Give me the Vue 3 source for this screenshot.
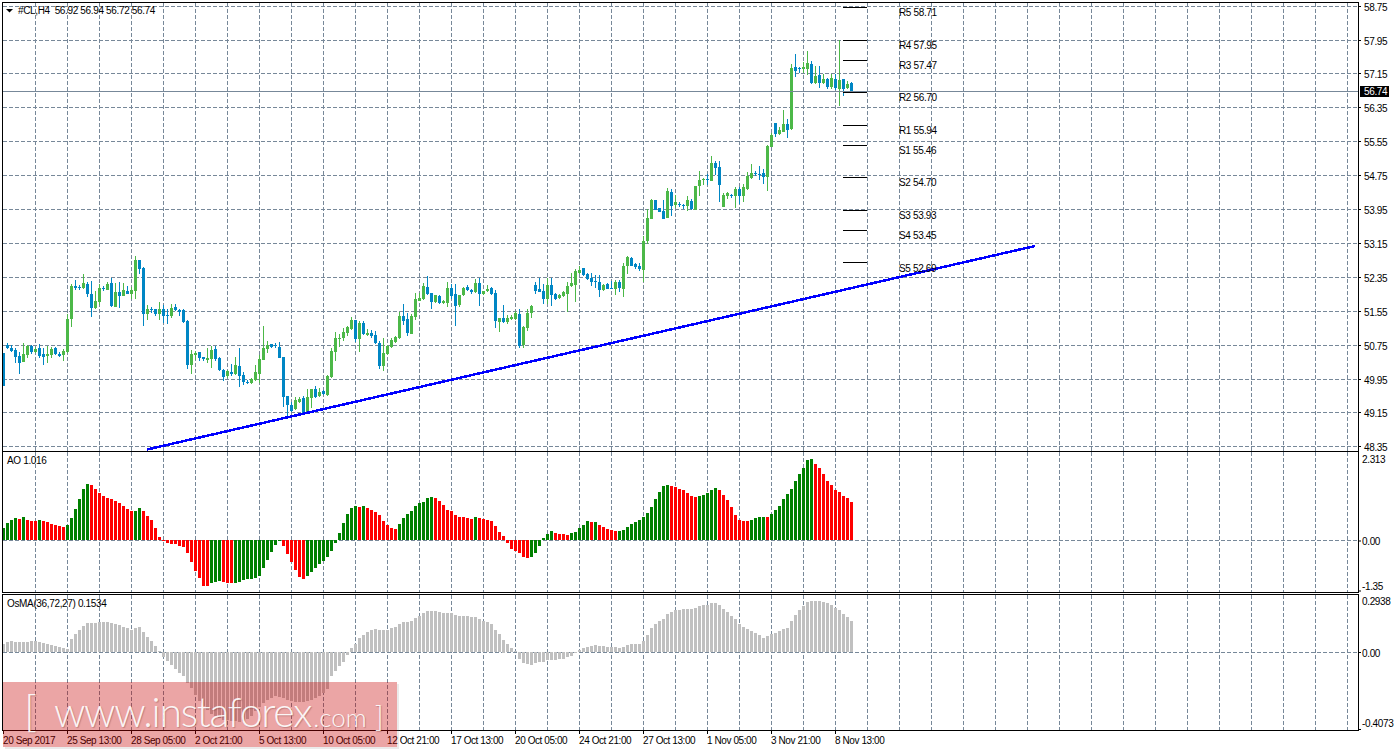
<template>
  <div class="terminal">
    <section class="pane pane-main">
      <div class="plot">
        <svg viewBox="3 3 1355 448" class="plot-svg">
          <path class="grid" :d="vGrid(3, 451)" />
          <path class="grid" :d="hGrid(mainLevels)" />
          <g shape-rendering="crispEdges">
            <g v-for="c in candles" :key="c.i" :fill="c.color">
              <rect :x="3 + 4 * c.i" :y="c.h" width="1" :height="c.l - c.h" />
              <rect :x="2 + 4 * c.i" :y="c.t" width="3" :height="c.b - c.t" />
            </g>
            <rect x="3" y="91" width="1355" height="1" fill="#778899" />
            <rect v-for="p in pivots" :key="p.name" x="843" :y="p.y" width="24" height="1" fill="#000" />
          </g>
          <line x1="147" y1="449.5" x2="1035" y2="246" class="trend" />
          <text v-for="p in pivots" :key="'t' + p.name" x="899" :y="p.labelY + 4" class="label">{{ p.name }} {{ p.value }}</text>
          <path d="M6 9h7l-3.5 3.5z" fill="#000" />
          <text x="18" y="14" class="label">#CL,H4 &nbsp;56.92 56.94 56.72 56.74</text>
        </svg>
      </div>
      <svg viewBox="1359 3 39 448" class="axis-svg">
        <g v-for="(lvl, n) in mainLevels" :key="lvl">
          <rect x="1359" :y="lvl" width="2" height="1" fill="#000" />
          <text x="1364" :y="lvl + 4.5" class="label">{{ mainLabels[n] }}</text>
        </g>
        <rect x="1360" y="86" width="29" height="11" fill="#000" />
        <text x="1364" y="95" class="label last-price">56.74</text>
      </svg>
    </section>

    <section class="pane pane-ao">
      <div class="plot">
        <svg viewBox="3 452 1355 140" class="plot-svg">
          <path class="grid" :d="vGrid(452, 592)" />
          <path class="grid" d="M3 540.5H1358" />
          <g shape-rendering="crispEdges">
            <rect
              v-for="b in aoBars"
              :key="b.i"
              :x="2 + 4 * b.i"
              :y="b.y"
              width="3"
              :height="b.height"
              :fill="b.color"
            />
          </g>
          <text x="7" y="464" class="label">AO 1.016</text>
        </svg>
      </div>
      <svg viewBox="1359 452 39 140" class="axis-svg">
        <rect x="1359" y="540" width="2" height="1" fill="#000" />
        <rect x="1359" y="590" width="2" height="1" fill="#000" />
        <text x="1362" y="462" class="label">2.313</text>
        <text x="1362" y="544.5" class="label">0.00</text>
        <text x="1362" y="589" class="label">-1.35</text>
      </svg>
    </section>

    <section class="pane pane-osma">
      <div class="plot">
        <svg viewBox="3 595 1355 135" class="plot-svg">
          <path class="grid" :d="vGrid(595, 730)" />
          <path class="grid" d="M3 652.5H1358" />
          <g shape-rendering="crispEdges" fill="#c0c0c0">
            <rect
              v-for="b in osmaBars"
              :key="b.i"
              :x="2 + 4 * b.i"
              :y="b.y"
              width="3"
              :height="b.height"
            />
          </g>
          <text x="7" y="607" class="label">OsMA(36,72,27) 0.1534</text>
        </svg>
      </div>
      <svg viewBox="1359 595 39 135" class="axis-svg">
        <rect x="1359" y="652" width="2" height="1" fill="#000" />
        <rect x="1359" y="729" width="2" height="1" fill="#000" />
        <text x="1362" y="605" class="label">0.2938</text>
        <text x="1362" y="656.5" class="label">0.00</text>
        <text x="1362" y="727" class="label">-0.4073</text>
      </svg>
    </section>

    <div class="time-axis">
      <span v-for="d in dates" :key="d" class="time">{{ d }}</span>
    </div>

    <div class="watermark">
      <span class="bracket-left">[</span>
      <span class="site">www.instaforex</span>
      <span class="tld">.com</span>
      <span class="bracket-right">]</span>
    </div>
  </div>
</template>

<script setup>
const GREEN = '#4cb848';
const BLUE = '#0086c4';

// pixel readings off the chart, 3x scale: colour, body top, body bottom, high, low
const candleRows = [
  {
    off: 240,
    rows: `b 340 437 340 437;b 316 324 309 327;b 324 333 316 336;b 331 350 325 368;b 348 368 337 401;g 342 365 310 366;g 317 345 316 353;b 318 336 316 343;g 327 336 322 340;b 324 347 312 353;b 342 351 325 375;g 342 348 317 369;g 327 345 322 354;b 323 342 322 345;b 342 348 336 352;g 333 345 327 363;g 237 336 223 338;g 138 236 132 261;b 139 145 120 149;b 141 144 135 149;g 129 145 102 147;b 132 162 127 171;b 162 204 123 231;g 183 204 153 206;g 144 186 132 195;b 144 147 138 153;g 132 150 126 151;b 129 198 114 201;g 156 201 129 202;b 156 168 126 204;g 150 168 129 169;b 153 162 138 163;g 150 162 140 177;g 60 153 48 177;b 60 87 60 102;b 84 222 81 258;g 207 222 195 240;b 207 210 201 219;b 207 222 207 228;g 207 222 186 240;b 207 228 195 249;b 225 228 207 252;g 204 228 192 234;b 201 210 192 212;b 210 216 207 228;b 210 246 207 249;b 243 375 240 387;g 342 375 330 402;g 339 345 333 360;b 336 354 336 363;b 351 357 351 363;g 354 360 323 369;g 330 357 318 384;b 327 357 318 363;b 354 390 351 393;b 390 411 387 423;g 393 408 390 414;b 396 402 372 408;g 375 402 351 405;b 378 408 324 441;b 405 426 396 435;b 426 429 420 432;g 417 429 414 431;g 396 420 375 422;g 357 402 345 429;g 324 360 258 361;g 315 327 303 340;b 312 321 312 324;b 315 319 309 324;b 321 354 306 354;b 351 471 351 501;b 468 495 468 528;b 495 513 486 516;g 480 507 471 510;g 477 486 471 489;b 475 520 468 522;g 471 517 447 520;g 447 474 447 503;b 447 471 438 473;g 456 468 444 470;b 453 462 450 465;g 408 465 405 468;g 333 411 324 413;g 294 336 276 363;g 294 297 282 321;g 276 294 264 303;g 261 279 258 288;g 240 267 231 270;b 240 297 240 306;g 249 297 243 336;b 249 282 243 285;g 279 285 267 288;b 279 288 270 294;b 285 309 273 312;b 309 378 303 387;g 339 378 294 393;g 318 342 315 345;g 300 321 294 324;g 291 306 288 309;g 228 294 216 297;b 228 243 192 255;b 237 279 219 288;g 228 282 222 283;g 177 231 160 240;g 174 183 160 184;g 138 177 129 180;b 141 162 108 165;b 159 186 159 207;g 165 186 165 188;b 168 189 165 192;g 183 189 180 192;g 144 189 126 201;b 144 168 132 177;b 162 198 132 258;g 165 195 165 201;g 144 165 141 168;b 141 150 135 153;b 150 156 147 162;g 129 156 117 159;b 129 162 114 198;g 153 162 153 164;g 147 153 135 156;b 144 162 141 165;b 159 243 150 264;g 234 246 234 276;b 234 246 195 249;g 234 246 225 251;g 232 237 225 240;g 219 237 213 240;b 222 318 207 324;g 261 315 258 324;g 219 264 207 273;g 198 219 195 234;b 135 153 126 162;b 147 156 114 157;b 153 177 132 192;g 135 177 114 192;b 135 165 114 198;b 162 177 159 180;g 165 174 162 177;g 156 168 153 171;g 138 162 125 215;g 129 138 99 141;g 93 135 87 186;g 90 99 78 102;b 84 105 84 108;b 102 117 99 120;b 114 126 99 138;b 123 126 105 144;b 126 150 105 171`,
  },
  {
    off: 130,
    rows: `g 465 480 462 483;b 462 477 460 477;b 474 477 453 477;g 456 477 450 495;b 456 474 450 486;g 408 477 399 501;g 381 408 378 432;b 384 408 381 408;b 402 411 399 417;b 408 417 399 423;g 333 420 318 456;g 264 333 237 342;g 210 267 207 267;b 210 240 210 240;b 234 246 234 246;b 243 267 210 267;g 183 264 174 264;b 186 228 177 258;g 216 225 195 234;b 222 225 216 231;b 225 228 222 237;g 210 228 198 243;b 213 237 207 240;g 168 240 168 240;g 150 168 123 198;g 147 150 144 165;b 147 150 132 165;g 99 153 78 153;b 99 114 93 135;b 111 165 93 216;g 195 231 189 231;g 189 198 186 207;b 195 198 192 204;g 177 198 171 234;b 177 198 171 222;g 171 198 162 216;g 138 177 126 180;g 129 144 102 147;b 129 133 123 138;b 132 135 108 150;b 129 141 117 162;g 48 141 45 183;g 15 51 9 51`,
  },
  {
    off: 0,
    rows: `b 369 402 369 410;g 390 402 381 405;g 372 396 330 397;b 372 390 357 414;g 204 387 192 390;b 201 213 162 231;b 203 206 201 220;g 201 207 186 219;g 189 207 153 225;b 192 249 183 252;g 228 249 198 252;b 225 249 198 264;g 237 249 222 252;b 237 261 234 267;g 234 261 222 267;b 237 264 222 270;g 240 267 120 318;b 237 267 237 288;g 252 264 243 267;b 249 276 246 276`,
  },
];

const candles = [];
candleRows.forEach(({ off, rows }) => {
  rows.split(';').forEach((row) => {
    const [c, t, b, h, l] = row.split(' ');
    const toY = (z) => Math.round(off + z / 3);
    const top = toY(+t);
    candles.push({
      i: candles.length,
      color: c === 'g' ? GREEN : BLUE,
      t: top,
      b: Math.max(toY(+b), top + 1),
      h: toY(+h),
      l: toY(+l),
    });
  });
});

const mainLevels = [6, 40, 73, 107, 141, 175, 209, 243, 277, 311, 345, 379, 412, 446];
const mainLabels = ['58.75', '57.95', '57.15', '56.35', '55.55', '54.75', '53.95', '53.15', '52.35', '51.55', '50.75', '49.95', '49.15', '48.35'];

const pivots = [
  { name: 'R5', value: '58.71', y: 7, labelY: 12 },
  { name: 'R4', value: '57.95', y: 40, labelY: 45 },
  { name: 'R3', value: '57.47', y: 60, labelY: 65 },
  { name: 'R2', value: '56.70', y: 92, labelY: 97 },
  { name: 'R1', value: '55.94', y: 125, labelY: 130 },
  { name: 'S1', value: '55.46', y: 145, labelY: 150 },
  { name: 'S2', value: '54.70', y: 177, labelY: 182 },
  { name: 'S3', value: '53.93', y: 210, labelY: 215 },
  { name: 'S4', value: '53.45', y: 230, labelY: 235 },
  { name: 'S5', value: '52.69', y: 262, labelY: 268 },
];

const aoRaw = [
  { zero: 300, rows: 'g264 g250 g240 g234 r237 g231 r240 r243 r243 g240 r243 r246 r252 r255 r258 r261 g255 g234 g207 g177 g147 g132 r135 r147 r159 r168 r174 r177 r183 r189 r198 r207 r213 g213 g204 r213 r228 r240 r264 r291 r303 r309 r312 r312 r318 r321 r339 r366 r393 r414 r438 r438 g429 g426 g423 r426 r429 r429 g429 g426 g420 g417 g417 g414 g408 g384 g360 g336 g315 g303 r318 r342 r366 r390 r411' },
  { zero: 270, rows: 'r387 g378 g366 g354 g342 g333 g321 g303 g279 g249 g219 g192 g174 g168 r171 g168 r174 r180 r186 r195 r213 r225 r234 r237 g222 g204 g192 g183 g168 g159 g156 g144 g141 r144 r153 r165 r180 r183 r195 r201 r201 r204 r207 g201 r204 r207 r210 r213 r228 r246 r258 r279 r297 r303 r309 r321 r324 g321 g309 g288 g264 g252 g243 r249 r252 r252 r255 g249 g246 g234 g225 g213 r216 g216 r225' },
  { zero: 270, rows: 'r231 r237 r240 r243 g243 g240 g231 g222 g216 g210 g201 g189 g171 g147 g126 g108 g105 r108 r111 r117 r120 r129 r138 r141 g138 g135 g129 g120 g114 r120 r135 r150 r171 r195 r210 r213 r213 g210 g204 g201 g201 r201 g192 g180 g168 g147 g132 g117 g93 g72 g54 g30 g27 r42 r54 r72 r93 r105 r120 r126 r138 r144 r156' },
];

const aoBars = [];
aoRaw.forEach(({ zero, rows }) => {
  rows.split(' ').forEach((cell) => {
    const h = (zero - Number(cell.slice(1))) / 3;
    aoBars.push({
      i: aoBars.length,
      color: cell[0] === 'g' ? '#008000' : '#ff0000',
      y: Math.round(h >= 0 ? 540 - h : 540),
      height: Math.max(Math.round(Math.abs(h)), 1),
    });
  });
});

// first stretch read at 3x around zero 187, second one at 2.96x as signed heights
const osmaLeft = [162, 157, 155, 156, 158, 158, 156, 155, 155, 157, 160, 163, 166, 168, 172, 175, 178, 147, 132, 120, 108, 101, 101, 101, 98, 96, 96, 101, 104, 107, 112, 116, 120, 115, 113, 127, 142, 155, 170, 183, 203, 215, 225, 238, 250, 258, 280, 296, 315, 335, 350, 362, 372, 380, 385, 390, 392, 395, 395, 398, 395, 388, 378, 365, 352, 340, 330, 325, 320, 322, 325, 330, 335, 337, 338, 336, 333, 330, 325, 320, 310, 298, 260, 245, 228];
const osmaRight = [-30, -10, 13, 25, 40, 49, 58, 64, 67, 64, 64, 64, 70, 73, 82, 88, 88, 91, 100, 106, 115, 121, 121, 121, 118, 115, 115, 115, 109, 106, 106, 106, 103, 103, 97, 91, 88, 82, 64, 52, 37, 25, 13, 4, -20, -32, -35, -38, -32, -29, -29, -23, -23, -23, -20, -20, -14, -11, -2, 7, 13, 16, 19, 22, 19, 19, 16, 16, 16, 13, 16, 22, 25, 25, 25, 34, 49, 70, 82, 91, 97, 112, 118, 124, 124, 127, 127, 127, 130, 136, 139, 139, 145, 145, 139, 127, 118, 106, 97, 82, 73, 67, 61, 55, 49, 40, 46, 52, 55, 61, 67, 70, 91, 109, 124, 136, 148, 151, 151, 151, 148, 145, 139, 130, 124, 112, 103, 91];

const osmaHeights = [
  ...osmaLeft.map((z) => (187 - z) / 3),
  ...osmaRight.map((v) => v / 2.96),
];
const osmaBars = osmaHeights.map((h, i) => ({
  i,
  y: Math.round(h >= 0 ? 652 - h : 652),
  height: Math.max(Math.round(Math.abs(h)), 1),
}));

const dates = ['20 Sep 2017', '25 Sep 13:00', '28 Sep 05:00', '2 Oct 21:00', '5 Oct 13:00', '10 Oct 05:00', '12 Oct 21:00', '17 Oct 13:00', '20 Oct 05:00', '24 Oct 21:00', '27 Oct 13:00', '1 Nov 05:00', '3 Nov 21:00', '8 Nov 13:00'];

const vGrid = (y1, y2) => {
  let d = '';
  for (let x = 35; x < 1358; x += 32) d += `M${x + 0.5} ${y1}V${y2}`;
  return d;
};

const hGrid = (levels) => levels.map((y) => `M3 ${y + 0.5}H1358`).join('');
</script>

<style scoped>
.terminal {
  position: relative;
  width: 1398px;
  height: 751px;
  padding-top: 2px;
  box-sizing: border-box;
  overflow: hidden;
  background: #fff;
  font-family: "Liberation Sans", Arial, sans-serif;
}

.pane {
  display: flex;
}

.pane-main {
  height: 450px;
}

.pane-ao {
  height: 141px;
}

.pane-osma {
  height: 137px;
  margin-top: 1px;
}

.plot {
  width: 1357px;
  margin-left: 2px;
  border-left: 1px solid #000;
  border-right: 1px solid #000;
  border-bottom: 1px solid #000;
  box-sizing: border-box;
}

.pane-main .plot,
.pane-osma .plot {
  border-top: 1px solid #000;
}

.plot-svg {
  display: block;
  width: 100%;
  height: 100%;
}

.axis-svg {
  display: block;
  width: 39px;
  height: 100%;
  overflow: visible;
}

.pane-main .axis-svg {
  margin-top: 1px;
  height: 448px;
}

.pane-osma .axis-svg {
  margin-top: 1px;
  height: 135px;
}

.grid {
  fill: none;
  stroke: #778899;
  stroke-width: 1;
  stroke-dasharray: 4 2;
  shape-rendering: crispEdges;
}

.trend {
  stroke: #0000ff;
  stroke-width: 2.5;
  shape-rendering: crispEdges;
}

.label {
  font-family: "Liberation Sans", Arial, sans-serif;
  font-size: 10px;
  letter-spacing: -0.35px;
  fill: #000;
}

.last-price {
  fill: #fff;
}

.time-axis {
  display: flex;
  padding-left: 3px;
}

.time {
  position: relative;
  width: 64px;
  flex: none;
  padding-top: 4px;
  font-size: 10px;
  line-height: 12px;
  letter-spacing: -0.42px;
  white-space: nowrap;
  color: #000;
}

.time::before {
  content: "";
  position: absolute;
  left: 0;
  top: 0;
  width: 1px;
  height: 3px;
  background: #000;
}

.watermark {
  position: absolute;
  left: 3px;
  top: 682px;
  width: 394px;
  height: 65px;
  display: flex;
  align-items: baseline;
  padding-left: 21px;
  box-sizing: border-box;
  background: rgba(198, 0, 0, 0.353);
  box-shadow: 2px 2px 0 rgba(120, 120, 120, 0.15);
  color: rgba(255, 255, 255, 0.92);
  font-family: Lato, "Open Sans", sans-serif;
  font-weight: 300;
  line-height: 56px;
  text-shadow: 1px 1px 1px rgba(120, 60, 60, 0.35);
}

.bracket-left {
  font-size: 44px;
  margin-right: 17px;
}

.site {
  font-size: 41px;
  letter-spacing: -1.3px;
}

.tld {
  font-size: 26px;
  margin-left: 2px;
}

.bracket-right {
  font-size: 30px;
  margin-left: 8px;
}
</style>
